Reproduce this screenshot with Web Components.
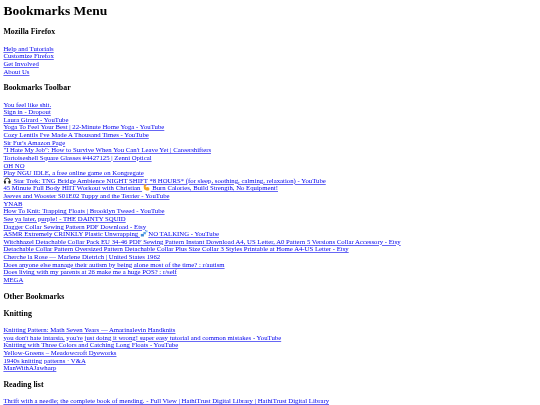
<!DOCTYPE html>
<html lang="en">
<head>
<meta charset="utf-8">
<title>Bookmarks</title>
<style>
html, body { margin: 0; background: #fff; }
body { overflow: hidden; height: 405px; }
</style>
</head>
<body>
<bookmarks-page>
  <bookmark-folder level="1" label="Bookmarks Menu"></bookmark-folder>
  <bookmark-folder label="Mozilla Firefox">
    <bookmark-link>Help and Tutorials</bookmark-link>
    <bookmark-link>Customize Firefox</bookmark-link>
    <bookmark-link>Get Involved</bookmark-link>
    <bookmark-link>About Us</bookmark-link>
  </bookmark-folder>
  <bookmark-folder label="Bookmarks Toolbar">
    <bookmark-link>You feel like shit.</bookmark-link>
    <bookmark-link>Sign in - Dropout</bookmark-link>
    <bookmark-link>Laura Girard - YouTube</bookmark-link>
    <bookmark-link>Yoga To Feel Your Best | 22-Minute Home Yoga - YouTube</bookmark-link>
    <bookmark-link>Cozy Lentils I've Made A Thousand Times - YouTube</bookmark-link>
    <bookmark-link>Sir Fur's Amazon Page</bookmark-link>
    <bookmark-link>"I Hate My Job": How to Survive When You Can't Leave Yet | Careershifters</bookmark-link>
    <bookmark-link>Tortoiseshell Square Glasses #4427125 | Zenni Optical</bookmark-link>
    <bookmark-link>OH NO</bookmark-link>
    <bookmark-link>Play NGU IDLE, a free online game on Kongregate</bookmark-link>
    <bookmark-link><emoji-icon name="headphones"></emoji-icon> Star Trek: TNG Bridge Ambience NIGHT SHIFT *8 HOURS* (for sleep, soothing, calming, relaxation) - YouTube</bookmark-link>
    <bookmark-link>45 Minute Full Body HIIT Workout with Christian <emoji-icon name="muscle"></emoji-icon> Burn Calories, Build Strength, No Equipment!</bookmark-link>
    <bookmark-link>Jeeves and Wooster S01E02 Tuppy and the Terrier - YouTube</bookmark-link>
    <bookmark-link>YNAB</bookmark-link>
    <bookmark-link>How To Knit: Trapping Floats | Brooklyn Tweed - YouTube</bookmark-link>
    <bookmark-link>See ya later, purple! - THE DAINTY SQUID</bookmark-link>
    <bookmark-link>Dagger Collar Sewing Pattern PDF Download - Etsy</bookmark-link>
    <bookmark-link>ASMR Extremely CRINKLY Plastic Unwrapping <emoji-icon name="zzz"></emoji-icon>NO TALKING - YouTube</bookmark-link>
    <bookmark-link>Witchhazel Detachable Collar Pack EU 34-46 PDF Sewing Pattern Instant Download A4, US Letter, A0 Pattern 5 Versions Collar Accessory - Etsy</bookmark-link>
    <bookmark-link>Detachable Collar Pattern Oversized Pattern Detachable Collar Plus Size Collar 3 Styles Printable at Home A4-US Letter - Etsy</bookmark-link>
    <bookmark-link>Cherche la Rose — Marlene Dietrich | United States 1962</bookmark-link>
    <bookmark-link>Does anyone else manage their autism by being alone most of the time? : r/autism</bookmark-link>
    <bookmark-link>Does living with my parents at 26 make me a huge POS? : r/self</bookmark-link>
    <bookmark-link>MEGA</bookmark-link>
  </bookmark-folder>
  <bookmark-folder label="Other Bookmarks"></bookmark-folder>
  <bookmark-folder label="Knitting">
    <bookmark-link>Knitting Pattern: Math Seven Years — Amarinalevin Handknits</bookmark-link>
    <bookmark-link>you don't hate intarsia, you're just doing it wrong! super easy tutorial and common mistakes - YouTube</bookmark-link>
    <bookmark-link>Knitting with Three Colors and Catching Long Floats - YouTube</bookmark-link>
    <bookmark-link>Yellow-Greens – Meadowcroft Dyeworks</bookmark-link>
    <bookmark-link>1940s knitting patterns · V&amp;A</bookmark-link>
    <bookmark-link>ManWithAJawharp</bookmark-link>
  </bookmark-folder>
  <bookmark-folder label="Reading list">
    <bookmark-link>Thrift with a needle; the complete book of mending. - Full View | HathiTrust Digital Library | HathiTrust Digital Library</bookmark-link>
  </bookmark-folder>
</bookmarks-page>

<script>
  customElements.define('bookmarks-page', class bookmarks_page extends HTMLElement {
    constructor() {
      super();
      this.attachShadow({ mode: 'open' });
      this.shadowRoot.innerHTML = `
<style>
:host {
  display: block;
  padding: 3.4px 3.4px 0;
  font-family: "Liberation Serif", "Times New Roman", serif;
  font-size: 6.75px;
  color: #000;
  filter: blur(0.3px);
}
</style>
<slot></slot>`;
    }
  });

  customElements.define('bookmark-folder', class bookmark_folder extends HTMLElement {
    constructor() {
      super();
      this.attachShadow({ mode: 'open' });
      this.shadowRoot.innerHTML = `
<style>
:host { display: block; }
.title {
  font-weight: bold;
  font-size: 7.9px;
  line-height: 9px;
  margin: 8.2px 0;
}
:host([level="1"]) .title {
  font-size: 13.5px;
  line-height: 15.5px;
  margin: 0 0 8.6px;
}
</style>
<div class="title"></div>
<div class="items"><slot></slot></div>`;
    }

    connectedCallback() {
      this.shadowRoot.querySelector('.title').textContent = this.getAttribute('label');
    }
  });

  customElements.define('bookmark-link', class bookmark_link extends HTMLElement {
    constructor() {
      super();
      this.attachShadow({ mode: 'open' });
      this.shadowRoot.innerHTML = `
<style>
:host {
  display: block;
  line-height: 7.63px;
  height: 7.63px;
  white-space: nowrap;
}
a {
  color: #0000ee;
  text-decoration: underline rgba(0, 0, 238, .6);
  text-decoration-thickness: 0.42px;
}
</style>
<a href="#"><slot></slot></a>`;
    }
  });

  const icons = {
    headphones: '<path d="M1.5 9V6.5a4.5 4.5 0 0 1 9 0V9" fill="none" stroke="#333" stroke-width="1.6"/><rect x="0.3" y="6.5" width="3.4" height="5" rx="1" fill="#222"/><rect x="8.3" y="6.5" width="3.4" height="5" rx="1" fill="#222"/>',
    muscle: '<path d="M2 1 6 .5 6.5 3 4.8 4 5.5 6.2C7 4.8 10 5 11.5 7V10.5C8 12.3 4 11.8 2.5 9.5 1.5 7 1.5 4 2 1Z" fill="#f5a623"/>',
    zzz: '<rect x="0" y="7" width="5.5" height="4.5" fill="#3f8ad6"/><rect x="4.5" y="3.5" width="4.5" height="4" fill="#5fa6e6"/><rect x="8.5" y="0.5" width="3.5" height="3.5" fill="#8cc4f0"/>'
  };

  customElements.define('emoji-icon', class emoji_icon extends HTMLElement {
    constructor() {
      super();
      this.attachShadow({ mode: 'open' });
    }

    connectedCallback() {
      this.shadowRoot.innerHTML = `
<style>
:host { display: inline-block; width: 8.4px; height: 6.75px; vertical-align: -0.8px; }
svg { display: block; width: 100%; height: 100%; }
</style>
<svg viewBox="0 0 12 12">${icons[this.getAttribute('name')]}</svg>`;
    }
  });
</script>
</body>
</html>
